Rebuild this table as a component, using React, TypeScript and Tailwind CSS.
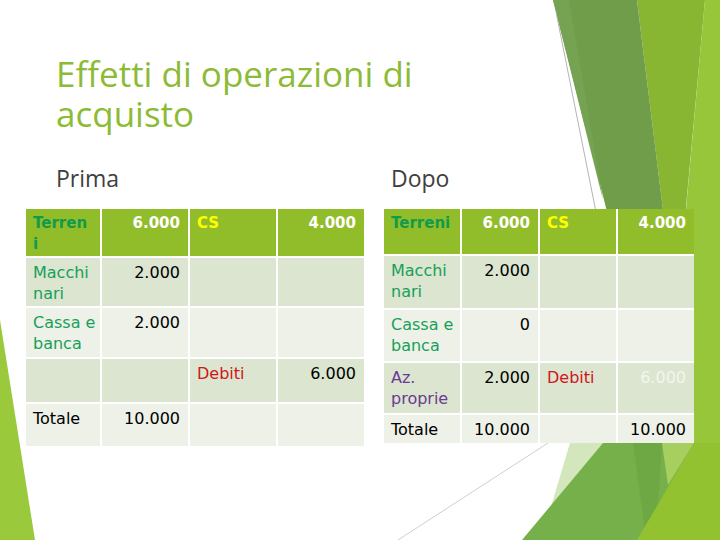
import type { ReactNode } from "react";

type Cell = {
  text?: ReactNode;
  right?: boolean;
  color?: string;
  bold?: boolean;
};

type Row = { bg: string; cells: Cell[] };

const HEAD = "bg-[#92bd2b]";
const DARK = "bg-[#dbe5cf]";
const LIGHT = "bg-[#edf1e7]";

const prima: Row[] = [
  {
    bg: HEAD,
    cells: [
      { text: <>Terren<br />i</>, color: "text-[#119a4a]", bold: true },
      { text: "6.000", right: true, color: "text-white", bold: true },
      { text: "CS", color: "text-[#ffff00]", bold: true },
      { text: "4.000", right: true, color: "text-white", bold: true },
    ],
  },
  {
    bg: DARK,
    cells: [
      { text: <>Macchi<br />nari</>, color: "text-[#17a05a]" },
      { text: "2.000", right: true },
      {},
      {},
    ],
  },
  {
    bg: LIGHT,
    cells: [
      { text: <>Cassa e<br />banca</>, color: "text-[#17a05a]" },
      { text: "2.000", right: true },
      {},
      {},
    ],
  },
  {
    bg: DARK,
    cells: [
      {},
      {},
      { text: "Debiti", color: "text-[#d0161c]" },
      { text: "6.000", right: true },
    ],
  },
  {
    bg: LIGHT,
    cells: [{ text: "Totale" }, { text: "10.000", right: true }, {}, {}],
  },
];

const dopo: Row[] = [
  {
    bg: HEAD,
    cells: [
      { text: "Terreni", color: "text-[#119a4a]", bold: true },
      { text: "6.000", right: true, color: "text-white", bold: true },
      { text: "CS", color: "text-[#ffff00]", bold: true },
      { text: "4.000", right: true, color: "text-white", bold: true },
    ],
  },
  {
    bg: DARK,
    cells: [
      { text: <>Macchi<br />nari</>, color: "text-[#17a05a]" },
      { text: "2.000", right: true },
      {},
      {},
    ],
  },
  {
    bg: LIGHT,
    cells: [
      { text: <>Cassa e<br />banca</>, color: "text-[#17a05a]" },
      { text: "0", right: true },
      {},
      {},
    ],
  },
  {
    bg: DARK,
    cells: [
      { text: <>Az.<br />proprie</>, color: "text-[#6b3a92]" },
      { text: "2.000", right: true },
      { text: "Debiti", color: "text-[#d0161c]" },
      { text: "6.000", right: true, color: "text-[#f3f6ee]" },
    ],
  },
  {
    bg: LIGHT,
    cells: [
      { text: "Totale" },
      { text: "10.000", right: true },
      {},
      { text: "10.000", right: true },
    ],
  },
];

function Table({ rows, grid }: { rows: Row[]; grid: string }) {
  return (
    <div className={`grid gap-[2px] bg-white font-['DejaVu_Sans',sans-serif] ${grid}`}>
      {rows.map((row, r) =>
        row.cells.map((c, i) => (
          <div
            key={`${r}-${i}`}
            className={`${row.bg} pt-[4px] pl-[7px] pr-[8px] whitespace-nowrap leading-[21px] ${
              c.bold ? "text-[15px] font-bold" : "text-[16px]"
            } ${c.right ? "text-right" : "text-left"} ${c.color ?? "text-black"}`}
          >
            {c.text}
          </div>
        ))
      )}
    </div>
  );
}

function Decor() {
  return (
    <svg className="absolute inset-0" width="720" height="540" viewBox="0 0 720 540">
      {/* top right ribbons */}
      <polygon points="705,0 720,0 720,540 656,540" fill="#97c63b" />
      <polygon points="637,0 705,0 676,316" fill="#88b632" />
      <polygon points="553,0 637,0 684,380 650,380" fill="#6f9d4a" />
      <polygon points="553,0 569,0 603,200" fill="#76a352" />
      <line x1="556" y1="12" x2="596" y2="212" stroke="#b5b5b5" strokeWidth="1" />
      {/* bottom right */}
      <line x1="548" y1="443" x2="398" y2="540" stroke="#cfcfcf" strokeWidth="1" />
      <polygon points="570,443 606,443 550,510" fill="#d4e6bc" />
      <polygon points="603,443 700,443 700,540 522,540" fill="#76b04a" />
      <polygon points="633,443 662,443 656,540 646,540" fill="#6ea845" />
      <polygon points="662,443 694,443 668,485" fill="#a6cf60" />
      <polygon points="694,443 720,443 720,540 637,540" fill="#93c231" />
      {/* left wedge */}
      <polygon points="0,320 35,540 0,540" fill="#9bc93c" />
    </svg>
  );
}

export default function App() {
  return (
    <div className="relative w-[720px] h-[540px] overflow-hidden bg-white">
      <Decor />
      <div className="relative flex flex-col">
        <h1 className="mt-[54px] pl-[56px] text-[35px] leading-[40px] font-normal text-[#8cbb36] font-['Open_Sans',sans-serif]">
          Effetti di operazioni di
          <br />
          acquisto
        </h1>
        <div className="mt-[29px] flex gap-[20px] pl-[26px]">
          <div className="flex w-[338px] flex-col">
            <div className="pl-[30px] text-[23px] leading-[30px] text-[#404040] font-['Open_Sans',sans-serif]">
              Prima
            </div>
            <div className="mt-[16px]">
              <Table
                rows={prima}
                grid="grid-cols-[74px_86px_86px_86px] grid-rows-[47px_48px_49px_43px_42px]"
              />
            </div>
          </div>
          <div className="flex w-[310px] flex-col">
            <div className="pl-[7px] text-[23px] leading-[30px] text-[#404040] font-['Open_Sans',sans-serif]">
              Dopo
            </div>
            <div className="mt-[16px]">
              <Table
                rows={dopo}
                grid="grid-cols-[76px_76px_76px_76px] grid-rows-[45px_52px_51px_50px_28px]"
              />
            </div>
          </div>
        </div>
      </div>
    </div>
  );
}
